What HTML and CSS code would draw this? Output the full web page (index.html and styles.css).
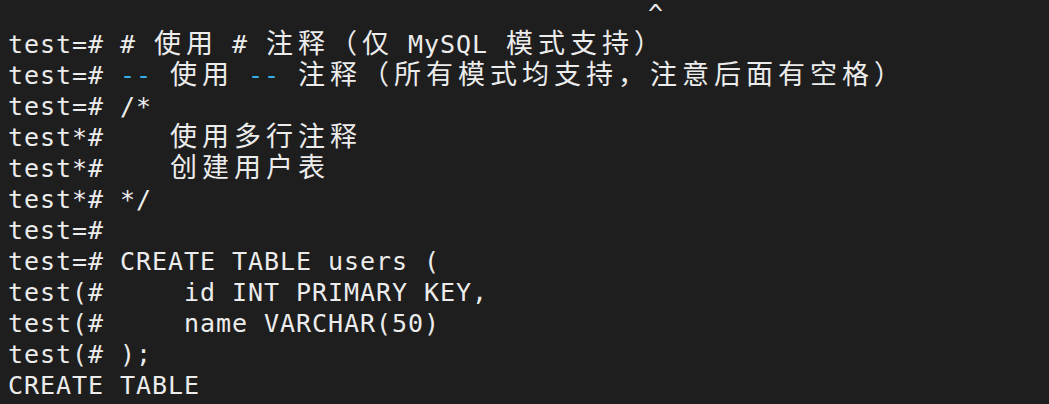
FILE: index.html
```html
<!DOCTYPE html>
<html lang="zh-CN">
<head>
<meta charset="utf-8">
<title>psql</title>
<link rel="stylesheet" href="styles.css">
</head>
<body>
<div class="term">
<div class="ln">                                        <span class="caret">^</span></div>
<div class="ln">test=# # <span class="cjk">使用</span> # <span class="cjk">注释（仅</span> MySQL <span class="cjk">模式支持）</span></div>
<div class="ln">test=# <span class="dash">--</span> <span class="cjk">使用</span> <span class="dash">--</span> <span class="cjk">注释（所有模式均支持，注意后面有空格）</span></div>
<div class="ln">test=# /*</div>
<div class="ln">test*#    <span class="cjk">使用多行注释</span></div>
<div class="ln">test*#    <span class="cjk">创建用户表</span></div>
<div class="ln">test*# */</div>
<div class="ln">test=#</div>
<div class="ln">test=# CREATE TABLE users (</div>
<div class="ln">test(#     id INT PRIMARY KEY,</div>
<div class="ln">test(#     name VARCHAR(50)</div>
<div class="ln">test(# );</div>
<div class="ln">CREATE TABLE</div>
</div>
</body>
</html>
```

FILE: styles.css
```css
html, body {
  margin: 0;
  padding: 0;
  background: #1e1e1e;
  height: 100%;
  overflow: hidden;
}

.term {
  margin-top: -2px;
  padding-left: 8px;
  font-family: "DejaVu Sans Mono", "Liberation Mono", monospace;
  font-size: 25px;
  letter-spacing: 0.95px;
  color: #ececec;
}

.ln {
  height: 31px;
  line-height: 31px;
  white-space: pre;
}

.cjk {
  font-family: "Noto Sans CJK SC", "Noto Sans CJK JP", sans-serif;
  font-size: 27px;
  letter-spacing: 5px;
  padding-left: 2px;
  margin-right: -2px;
  line-height: 20px;
}

.dash {
  color: #3aaee8;
}

.caret {
  vertical-align: 5px;
}
```
